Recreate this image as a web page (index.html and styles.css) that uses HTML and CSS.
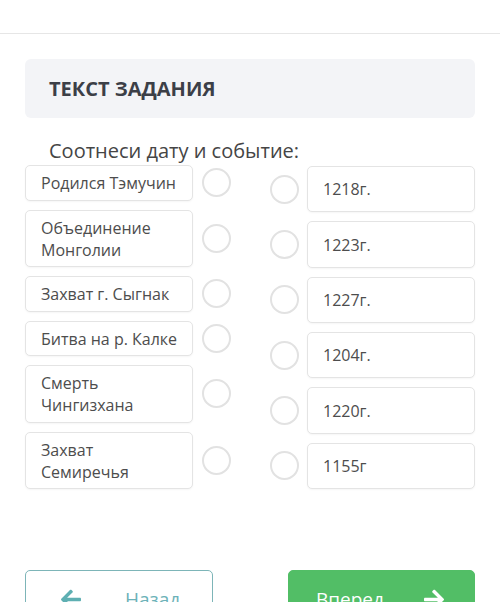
FILE: index.html
```html
<!DOCTYPE html>
<html lang="ru">
<head>
<meta charset="utf-8">
<link rel="stylesheet" href="styles.css">
</head>
<body>
<div class="topbar"></div>
<main class="content">
  <div class="task-head">ТЕКСТ ЗАДАНИЯ</div>
  <p class="question">Соотнеси дату и событие:</p>
  <div class="match">
    <div class="col col-left">
      <div class="row"><div class="box">Родился Тэмучин</div><span class="radio"></span></div>
      <div class="row"><div class="box">Объединение<br>Монголии</div><span class="radio"></span></div>
      <div class="row"><div class="box">Захват г. Сыгнак</div><span class="radio"></span></div>
      <div class="row"><div class="box">Битва на р. Калке</div><span class="radio"></span></div>
      <div class="row"><div class="box">Смерть<br>Чингизхана</div><span class="radio"></span></div>
      <div class="row"><div class="box">Захват<br>Семиречья</div><span class="radio"></span></div>
    </div>
    <div class="col col-right">
      <div class="row"><span class="radio"></span><div class="box">1218г.</div></div>
      <div class="row"><span class="radio"></span><div class="box">1223г.</div></div>
      <div class="row"><span class="radio"></span><div class="box">1227г.</div></div>
      <div class="row"><span class="radio"></span><div class="box">1204г.</div></div>
      <div class="row"><span class="radio"></span><div class="box">1220г.</div></div>
      <div class="row"><span class="radio"></span><div class="box">1155г</div></div>
    </div>
  </div>
  <div class="nav">
    <button class="btn btn-back">
      <svg class="arrow" viewBox="0 0 448 512" aria-hidden="true"><path d="M257.5 445.1l-22.2 22.2c-9.4 9.4-24.6 9.4-33.9 0L7 273c-9.4-9.4-9.4-24.6 0-33.9L201.4 44.7c9.4-9.4 24.6-9.4 33.9 0l22.2 22.2c9.5 9.5 9.3 25-.4 34.3L136.6 216H424c13.3 0 24 10.7 24 24v32c0 13.3-10.7 24-24 24H136.6l120.5 114.8c9.8 9.3 10 24.8.4 34.3z"/></svg>
      <span class="btn-label">Назад</span>
    </button>
    <button class="btn btn-next">
      <span class="btn-label">Вперед</span>
      <svg class="arrow" viewBox="0 0 448 512" aria-hidden="true"><path d="M190.5 66.9l22.2-22.2c9.4-9.4 24.6-9.4 33.9 0L441 239c9.4 9.4 9.4 24.6 0 33.9L246.6 467.3c-9.4 9.4-24.6 9.4-33.9 0l-22.2-22.2c-9.5-9.5-9.3-25 .4-34.3L311.4 296H24c-13.3 0-24-10.7-24-24v-32c0-13.3 10.7-24 24-24h287.4L190.9 101.2c-9.8-9.3-10-24.8-.4-34.3z"/></svg>
    </button>
  </div>
</main>
</body>
</html>
```
FILE: styles.css
```css
* { box-sizing: border-box; }
html, body { margin: 0; padding: 0; background: #ffffff; }
body {
  font-family: "Open Sans", "Noto Sans", sans-serif;
  color: #4a4a4a;
  overflow: hidden;
}
.topbar {
  height: 34px;
  border-bottom: 1px solid #e6e6e6;
}
.content {
  padding: 25px 25px 0 25px;
}
.task-head {
  background: #f3f4f7;
  border-radius: 6px;
  height: 59px;
  display: flex;
  align-items: center;
  padding-left: 24px;
  font-size: 20px;
  font-weight: 700;
  color: #3c3f47;
}
.question {
  margin: 19px 0 0 24px;
  font-size: 20px;
  line-height: 28px;
  color: #454545;
}
.match {
  display: flex;
  justify-content: space-between;
}
.col {
  display: flex;
  flex-direction: column;
  gap: 9px;
}
.col-right {
  padding-top: 1px;
}
.row {
  display: flex;
  align-items: center;
}
.col-right .row { flex: 1; gap: 8px; }
.col-left .row { gap: 9px; }
.box {
  width: 168px;
  border: 1px solid #e4e4e4;
  border-radius: 5px;
  background: #fff;
  padding: 6px 4px 5.5px 15px;
  font-size: 16px;
  line-height: 22px;
  color: #4d4d4d;
  box-shadow: 0 1px 2px rgba(0,0,0,0.04);
}
.col-right .box {
  align-self: stretch;
  display: flex;
  align-items: center;
}
.radio {
  width: 29px;
  height: 29px;
  border: 2px solid #e2e2e2;
  border-radius: 50%;
  flex: none;
  background: #fff;
}
.nav {
  display: flex;
  justify-content: space-between;
  margin-top: 81px;
}
.btn {
  width: 188px;
  height: 58px;
  border-radius: 5px;
  font-family: "Open Sans", "Noto Sans", sans-serif;
  font-size: 19px;
  display: flex;
  align-items: center;
  padding: 0;
  cursor: pointer;
}
.btn .arrow { width: 20px; height: 23px; flex: none; }
.btn-back {
  background: #fff;
  border: 1px solid #7db5b8;
  color: #6cb2b8;
}
.btn-back .arrow { fill: #5eafb2; margin-left: 35px; }
.btn-back .btn-label { margin-left: 44px; }
.btn-next {
  background: #52be66;
  border: 1px solid #52be66;
  color: #ffffff;
  width: 187px;
}
.btn-next .btn-label { margin-left: 27px; }
.btn-next .arrow { fill: #ffffff; margin-left: 40px; }
```
